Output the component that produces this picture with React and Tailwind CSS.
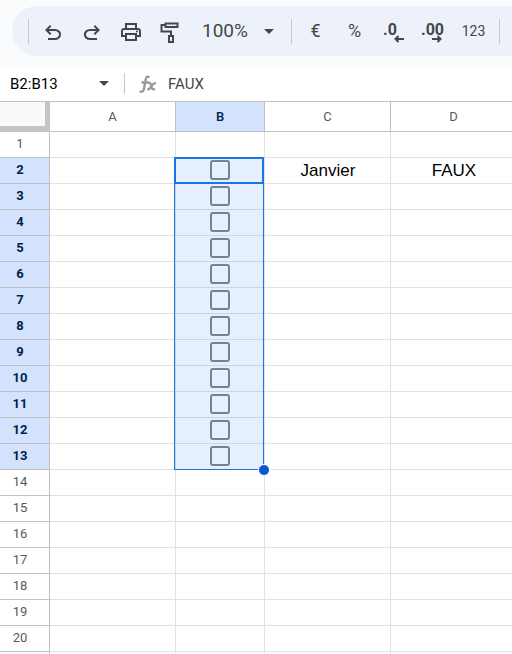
import React from "react";

const rows = Array.from({ length: 20 }, (_, i) => i + 1);

const UNDO =
  "M280-200v-80h284q63 0 109.5-40T720-420q0-60-46.5-100T564-560H312l104 104-56 56-200-200 200-200 56 56-104 104h252q97 0 169.5 63T800-420q0 94-72.5 157T564-200H280Z";
const REDO =
  "M396-200q-97 0-169.5-63T154-420q0-94 72.5-157T396-640h252L544-744l56-56 200 200-200 200-56-56 104-104H396q-63 0-109.5 40T240-420q0 60 46.5 100T396-280h284v80H396Z";
const PRINT =
  "M640-640v-120H320v120h-80v-200h480v200h-80Zm80 180q17 0 28.5-11.5T760-500q0-17-11.5-28.5T720-540q-17 0-28.5 11.5T680-500q0 17 11.5 28.5T720-460Zm-80 260v-160H320v160h320Zm80 80H240v-160H80v-240q0-51 35-85.5t85-34.5h560q51 0 85.5 34.5T880-520v240H720v160Zm80-240v-160q0-17-11.5-28.5T760-560H200q-17 0-28.5 11.5T160-520v160h80v-80h480v80h80Z";

function Symbol({ path, viewBox = "0 -1000 960 960" }) {
  return (
    <svg className="size-6" viewBox={viewBox} fill="currentColor" aria-hidden="true">
      <path d={path} />
    </svg>
  );
}

function Caret() {
  return (
    <svg className="h-[5px] w-[10px]" viewBox="0 0 10 5" fill="currentColor" aria-hidden="true">
      <path d="M0 0h10L5 5z" />
    </svg>
  );
}

function ToolButton({ label, children }) {
  return (
    <button
      type="button"
      aria-label={label}
      className="flex h-10 w-[39px] shrink-0 items-center justify-center text-left"
    >
      {children}
    </button>
  );
}

function Separator({ className }) {
  return <div className={`h-[25px] w-px shrink-0 bg-[#c7c7c7] ${className}`} />;
}

function Toolbar() {
  return (
    <div className="bg-[#f9fbfd] pt-[6px] pb-[10px] pl-3">
      <div
        role="toolbar"
        aria-label="Outils"
        className="flex h-[50px] items-center overflow-hidden rounded-l-full bg-[#edf2fa] text-[#444746]"
      >
        <Separator className="mr-1 ml-4" />
        <ToolButton label="Annuler">
          <Symbol path={UNDO} viewBox="0 -1040 960 960" />
        </ToolButton>
        <ToolButton label="Rétablir">
          <Symbol path={REDO} viewBox="0 -1040 960 960" />
        </ToolButton>
        <ToolButton label="Imprimer">
          <Symbol path={PRINT} />
        </ToolButton>
        <ToolButton label="Reproduire la mise en forme">
          <svg className="size-6" viewBox="0 -1 24 24" fill="none" stroke="currentColor" strokeWidth="2" aria-hidden="true">
            <path d="M7.500 3.500h12v3.500h-12zM7.500 5H3.500v6.500h9.500v4M11 16h4v6h-4z" />
          </svg>
        </ToolButton>
        <button
          type="button"
          aria-label="Zoom 100%"
          className="flex h-10 w-[98px] shrink-0 items-center justify-between px-[13px] text-[19px] leading-6"
        >
          100%
          <Caret />
        </button>
        <Separator className="mx-1" />
        <ToolButton label="Format devise">
          <span className="text-lg">€</span>
        </ToolButton>
        <ToolButton label="Format pourcentage">
          <span className="text-lg">%</span>
        </ToolButton>
        <ToolButton label="Réduire le nombre de décimales">
          <span className="flex flex-col pt-1">
            <span className="text-base leading-3 font-bold">.0</span>
            <svg className="-mt-px ml-[11px] h-2 w-[10px]" viewBox="0 0 10 8" fill="none" stroke="currentColor" strokeWidth="2" aria-hidden="true">
              <path d="M10 4H1.500M4.500 1l-3 3 3 3" />
            </svg>
          </span>
        </ToolButton>
        <ToolButton label="Augmenter le nombre de décimales">
          <span className="flex flex-col pt-1">
            <span className="text-base leading-3 font-bold">.00</span>
            <svg className="-mt-px ml-[11px] h-2 w-[10px]" viewBox="0 0 10 8" fill="none" stroke="currentColor" strokeWidth="2" aria-hidden="true">
              <path d="M0 4h8.500M5.500 1l3 3-3 3" />
            </svg>
          </span>
        </ToolButton>
        <button type="button" className="h-10 w-[43px] shrink-0 text-center text-sm">
          123
        </button>
        <Separator className="mx-1" />
      </div>
    </div>
  );
}

function FormulaBar() {
  return (
    <div className="flex h-[35px] items-center bg-white text-[#444746]">
      <input
        aria-label="Zone de nom"
        defaultValue="B2:B13"
        className="h-6 w-[89px] shrink-0 pl-[10px] text-[15px] text-black outline-none"
      />
      <button
        type="button"
        aria-label="Plages nommées"
        className="flex h-6 w-[30px] shrink-0 items-center justify-center"
      >
        <Caret />
      </button>
      <div className="mr-[14px] ml-[5px] h-[21px] w-px shrink-0 bg-[#c7c7c7]" />
      <svg className="h-[18px] w-[18px] shrink-0" viewBox="0 0 18 18" fill="none" stroke="#999999" strokeWidth="2.300" aria-hidden="true">
        <path d="M10.500 2.200C8.500 1 7.200 1.700 6.800 4L4.900 14.200C4.500 16.500 2.800 17.300 .6 16.200M2.500 7.500h7M9 8c1.800-.5 2.400 0 2.800 1.600l.9 3.200c.4 1.500 1.400 1.800 3.300 1.300M17 8.300c-1.600-.6-2.700 0-4.200 2.600s-2.500 4-4.600 3.300" />
      </svg>
      <input
        aria-label="Barre de formule"
        defaultValue="FAUX"
        className="h-6 min-w-0 flex-1 pl-[11px] text-[15px] outline-none"
      />
    </div>
  );
}

function ColumnHead({ name, selected }) {
  return (
    <th
      scope="col"
      className={
        "border-r border-b border-[#c0c0c0] p-0 text-[13px] " +
        (selected ? "bg-[#d3e3fd] font-medium text-[#041e49]" : "bg-white font-normal text-[#575a5a]")
      }
    >
      {name}
    </th>
  );
}

function Selection() {
  return (
    <div className="pointer-events-none absolute -top-px -left-[2px] z-10 h-[313px] w-[90px] border border-[#1a73e8] bg-[#0e65eb]/10">
      <div className="absolute -top-px -left-px h-[27px] w-[90px] border-2 border-[#1a73e8]" />
      <div className="absolute -right-[7px] -bottom-[7px] size-3 rounded-full border border-white bg-[#0b57d0]" />
    </div>
  );
}

function Sheet() {
  const cell = "border-r border-b border-[#e1e1e1] p-0 text-center";
  const textCell =
    cell + " pt-px pl-px font-['Liberation_Sans',Arial,sans-serif] text-[17px] leading-6 text-black";
  return (
    <div className="min-h-0 flex-1 overflow-hidden border-t border-[#c0c0c0]">
      <table className="w-[517px] table-fixed border-separate border-spacing-0">
        <colgroup>
          <col className="w-[50px]" />
          <col className="w-[126px]" />
          <col className="w-[89px]" />
          <col className="w-[126px]" />
          <col className="w-[126px]" />
        </colgroup>
        <thead>
          <tr className="h-[30px]">
            <td className="border-r-[5px] border-b-[6px] border-[#c4c4c4] bg-[#f8f9fa] p-0" />
            <ColumnHead name="A" />
            <ColumnHead name="B" selected />
            <ColumnHead name="C" />
            <ColumnHead name="D" />
          </tr>
        </thead>
        <tbody>
          {rows.map((n) => {
            const selected = n >= 2 && n <= 13;
            return (
              <tr key={n} className="h-[26px]">
                <th
                  scope="row"
                  className={
                    "border-r border-b border-[#c0c0c0] pt-0 pr-[9px] pb-[2px] pl-0 text-[13px] leading-[22px] " +
                    (selected ? "bg-[#d3e3fd] font-bold text-[#041e49]" : "bg-white font-normal text-[#575a5a]")
                  }
                >
                  {n}
                </th>
                <td className={cell} />
                <td className={cell + " relative"}>
                  {selected && (
                    <input
                      type="checkbox"
                      aria-label={`B${n}`}
                      className="mx-auto mb-px block size-5 appearance-none rounded-[3px] border-2 border-[#80868b] bg-white"
                    />
                  )}
                  {n === 2 && <Selection />}
                </td>
                <td className={textCell}>{n === 2 ? "Janvier" : null}</td>
                <td className={textCell}>{n === 2 ? "FAUX" : null}</td>
              </tr>
            );
          })}
          <tr className="h-[26px]">
            <td className="border-r border-[#c0c0c0]" />
            <td className="border-r border-[#e1e1e1]" />
            <td className="border-r border-[#e1e1e1]" />
            <td className="border-r border-[#e1e1e1]" />
            <td />
          </tr>
        </tbody>
      </table>
    </div>
  );
}

export default function App() {
  return (
    <main className="flex h-screen flex-col overflow-hidden bg-white font-[Roboto,sans-serif]">
      <Toolbar />
      <FormulaBar />
      <Sheet />
    </main>
  );
}
